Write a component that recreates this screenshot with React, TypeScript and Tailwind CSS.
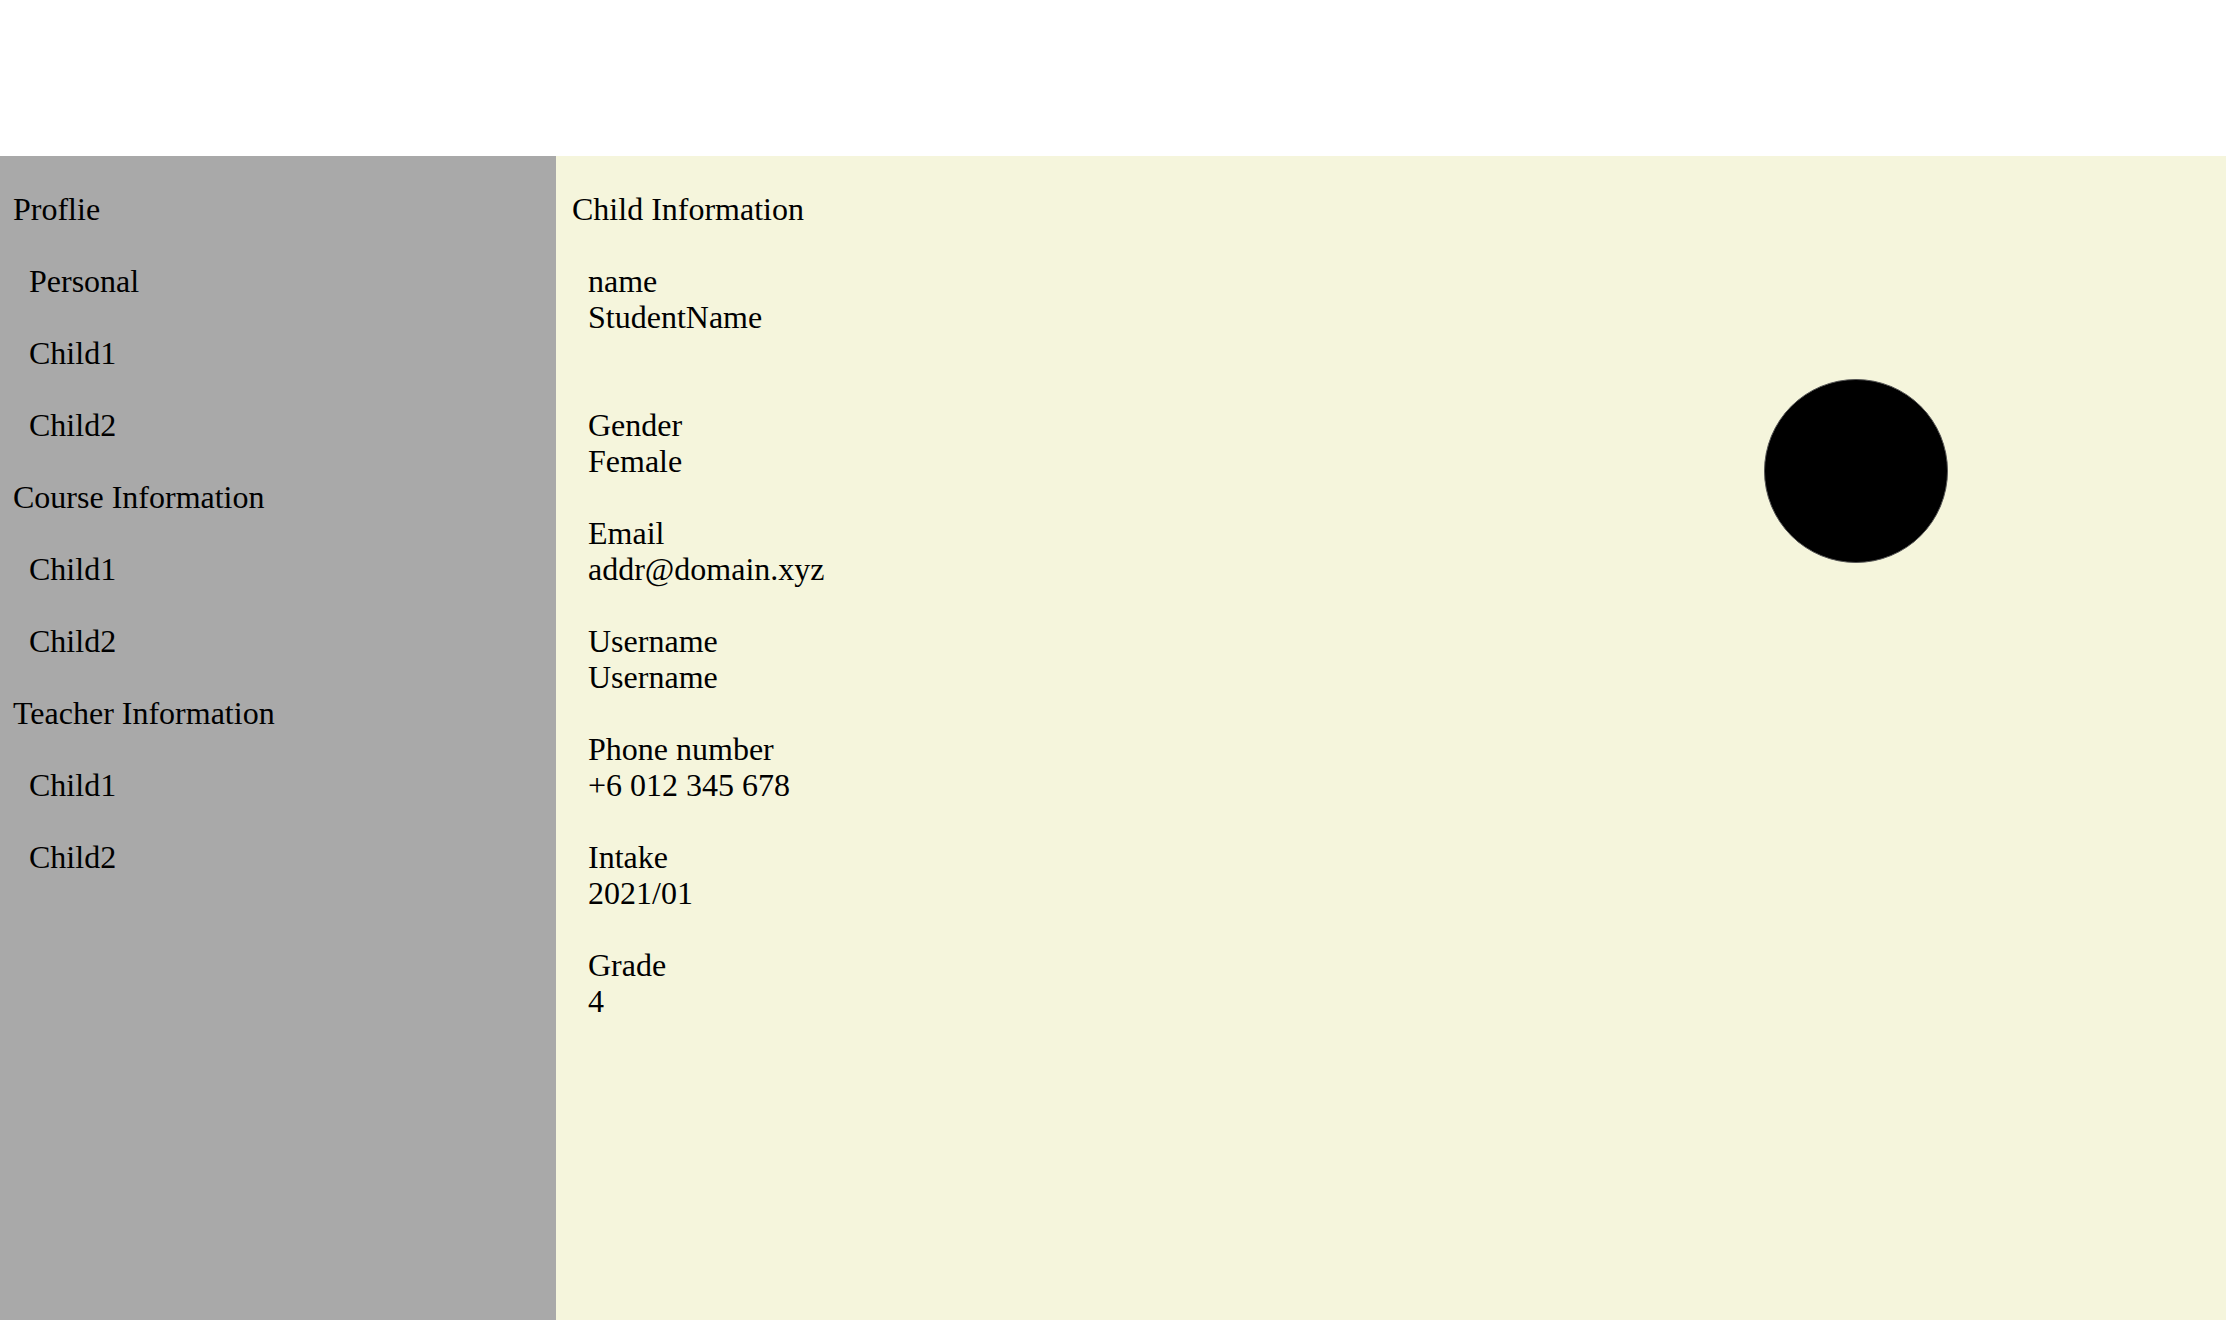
import React from "react";

const sidebar: { title: string; items: string[] }[] = [
  { title: "Proflie", items: ["Personal", "Child1", "Child2"] },
  { title: "Course Information", items: ["Child1", "Child2"] },
  { title: "Teacher Information", items: ["Child1", "Child2"] },
];

const fields: [string, string][] = [
  ["Gender", "Female"],
  ["Email", "addr@domain.xyz"],
  ["Username", "Username"],
  ["Phone number", "+6 012 345 678"],
  ["Intake", "2021/01"],
  ["Grade", "4"],
];

export default function App() {
  return (
    <div
      className="flex h-[1320px] w-full flex-col overflow-hidden bg-white text-black"
      style={{ fontFamily: '"Liberation Serif", "Times New Roman", serif' }}
    >
      <div className="h-[156px] shrink-0 bg-white" />
      <div className="flex min-h-0 flex-1 text-[32px] leading-[36px]">
        <aside className="flex w-[556px] shrink-0 flex-col gap-[36px] bg-[#a9a9a9] pl-[13px] pt-[35px]">
          {sidebar.flatMap((s) => [
            <div key={s.title}>{s.title}</div>,
            ...s.items.map((it, i) => (
              <div key={s.title + i} className="pl-[16px]">
                {it}
              </div>
            )),
          ])}
        </aside>
        <main className="relative flex-1 bg-[#f5f5dc] pl-[16px] pt-[35px]">
          <div>Child Information</div>
          <div className="mt-[36px] flex flex-col gap-[36px] pl-[16px]">
            <div className="mb-[36px]">
              <div>name</div>
              <div>StudentName</div>
            </div>
            {fields.map(([k, v]) => (
              <div key={k}>
                <div>{k}</div>
                <div>{v}</div>
              </div>
            ))}
          </div>
          <div className="absolute left-[1208px] top-[223px] h-[184px] w-[184px] rounded-full border border-[#555] bg-black" />
        </main>
      </div>
    </div>
  );
}
